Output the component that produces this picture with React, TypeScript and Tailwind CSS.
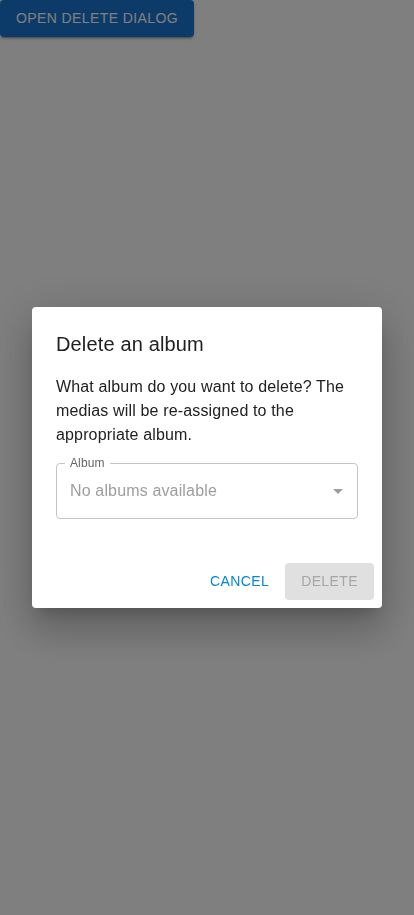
import { useState } from 'react';

function ArrowDropDown() {
  return (
    <svg viewBox="0 0 24 24" className="absolute right-[7px] top-1/2 h-6 w-6 -translate-y-1/2 fill-[#9e9e9e]">
      <path d="M7 10l5 5 5-5z" />
    </svg>
  );
}

export default function App() {
  const [open, setOpen] = useState(true);

  return (
    <div className="relative min-h-[915px] bg-white font-['Liberation_Sans',Arial,sans-serif]">
      <button
        onClick={() => setOpen(true)}
        className="rounded-[4px] bg-[#1976d2] px-4 py-[6px] text-sm uppercase leading-[24.5px] tracking-[0.4px] text-white shadow-[0_3px_1px_-2px_rgba(0,0,0,0.2),0_2px_2px_0_rgba(0,0,0,0.14),0_1px_5px_0_rgba(0,0,0,0.12)]"
      >
        Open delete dialog
      </button>

      {open && (
        <div className="fixed inset-0 flex items-center justify-center px-8">
          <div className="absolute inset-0 bg-black/50" onClick={() => setOpen(false)} />
          <div className="relative w-full rounded-[4px] bg-white shadow-[0_11px_15px_-7px_rgba(0,0,0,0.2),0_24px_38px_3px_rgba(0,0,0,0.14),0_9px_46px_8px_rgba(0,0,0,0.12)]">
            <h2 className="px-6 pt-[21px] text-[20px] leading-8 tracking-[0.15px] text-[#212121]">Delete an album</h2>
            <div className="mt-[15px] px-6">
              <p className="text-base leading-6 tracking-[0.15px] text-[#212121]">
                What album do you want to delete? The medias will be re-assigned to the appropriate album.
              </p>
              <div className="relative mt-4 h-[56px] rounded-[4px] border border-[#c4c4c4]">
                <span className="absolute left-[8px] top-[-1px] -translate-y-1/2 bg-white px-[5px] text-xs leading-3 tracking-[0.11px] text-[#666666]">
                  Album
                </span>
                <div className="flex h-full items-center pl-[13px] text-base tracking-[0.15px] text-[#9e9e9e]">
                  No albums available
                </div>
                <ArrowDropDown />
              </div>
            </div>
            <div className="mt-[36px] flex justify-end gap-2 p-2">
              <button
                onClick={() => setOpen(false)}
                className="rounded-[4px] px-2 py-[6px] text-sm uppercase leading-[24.5px] tracking-[0.4px] text-[#0288d1]"
              >
                Cancel
              </button>
              <button
                disabled
                className="rounded-[4px] bg-[#e0e0e0] px-4 py-[6px] text-sm uppercase leading-[24.5px] tracking-[0.4px] text-[#a6a6a6]"
              >
                Delete
              </button>
            </div>
          </div>
        </div>
      )}
    </div>
  );
}
